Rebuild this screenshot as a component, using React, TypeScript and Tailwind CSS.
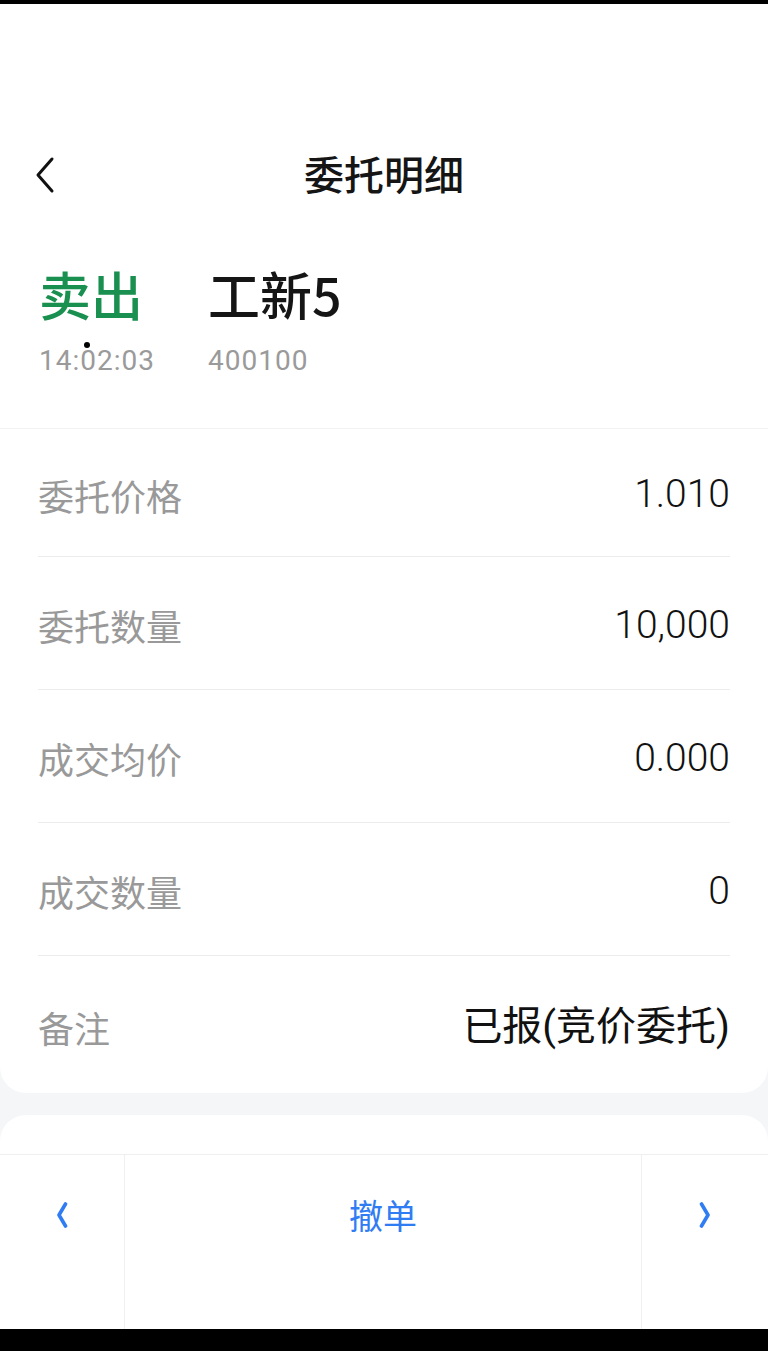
import React from 'react';

const cjk = "font-['Noto_Sans_CJK_SC',sans-serif]";
const num = "font-['Roboto','Noto_Sans_CJK_SC',sans-serif]";

const rows = [
  { label: '委托价格', value: '1.010', first: true },
  { label: '委托数量', value: '10,000' },
  { label: '成交均价', value: '0.000' },
  { label: '成交数量', value: '0' },
  { label: '备注', value: '已报(竞价委托)', last: true },
];

function Chevron({ dir, className }: { dir: 'left' | 'right'; className?: string }) {
  return (
    <svg width="12" height="26" viewBox="0 0 12 26" className={className}>
      <path
        d={dir === 'left' ? 'M9.5 2 L3 13 L9.5 24' : 'M2.5 2 L9 13 L2.5 24'}
        fill="none"
        stroke="currentColor"
        strokeWidth="3.6"
        strokeLinecap="round"
        strokeLinejoin="round"
      />
    </svg>
  );
}

export default function App() {
  return (
    <div className={`w-[768px] h-[1351px] bg-[#f5f6f8] flex flex-col overflow-hidden ${cjk}`}>
      {/* status strip */}
      <div className="h-[4px] bg-black shrink-0" />

      {/* header */}
      <div className="h-[424px] bg-white shrink-0 flex flex-col">
        <div className="h-[127px]" />
        <div className="relative h-[88px] flex items-center justify-center">
          <svg width="22" height="38" viewBox="0 0 22 38" className="absolute left-[34px] top-[25px]">
            <path d="M18 3 L4 19 L18 35" fill="none" stroke="#111" strokeWidth="3" strokeLinecap="round" strokeLinejoin="round" />
          </svg>
          <span className="text-[40px] font-medium text-[#151515] leading-none -mt-[4px]">委托明细</span>
        </div>

        <div className="flex mt-[49px] pl-[39px]">
          <div className="w-[169px] flex flex-col">
            <span className="text-[52px] font-medium text-[#19904f] leading-none">卖出</span>
            <span className={`relative mt-[27px] text-[28px] text-[#9a9a9a] leading-none tracking-[1px] ${num}`}>
              14:02:03
              <span className="absolute left-[45px] top-[-5px] w-[6px] h-[6px] rounded-full bg-black" />
            </span>
          </div>
          <div className="flex flex-col">
            <span className={`text-[52px] font-medium text-[#151515] leading-none ${cjk}`}>工新5</span>
            <span className={`mt-[27px] text-[28px] text-[#9a9a9a] leading-none tracking-[1px] ${num}`}>400100</span>
          </div>
        </div>
      </div>

      {/* detail card */}
      <div className="bg-white rounded-b-[26px] border-t border-[#f2f2f2] shrink-0 px-[38px]">
        {rows.map((r) => (
          <div
            key={r.label}
            className={`flex items-center justify-between ${r.first ? 'h-[128px] pt-[4px]' : 'h-[133px] pt-[4px]'} ${
              r.last ? 'h-[137px]' : 'border-b border-[#ececec]'
            }`}
          >
            <span className="text-[36px] text-[#999999]">{r.label}</span>
            <span className={`${r.last ? 'text-[40px]' : 'text-[39px] font-light'} text-[#111111] ${num}`}>{r.value}</span>
          </div>
        ))}
      </div>

      <div className="h-[22px] shrink-0" />

      {/* second card top */}
      <div className="h-[39px] bg-white rounded-t-[26px] shrink-0" />

      {/* action bar */}
      <div className="h-[175px] bg-white border-t border-[#efefef] shrink-0 grid grid-cols-[125px_1fr_126px]">
        <div className="flex justify-center text-[#2f7cf3] border-r border-[#f0f0f0] pt-[47px]">
          <Chevron dir="left" />
        </div>
        <div className="flex justify-center border-r border-[#f0f0f0] pt-[38px]">
          <span className="text-[34px] leading-[44px] text-[#2f7cf3]">撤单</span>
        </div>
        <div className="flex justify-center text-[#2f7cf3] pt-[47px]">
          <Chevron dir="right" />
        </div>
      </div>

      <div className="flex-1 bg-black" />
    </div>
  );
}
